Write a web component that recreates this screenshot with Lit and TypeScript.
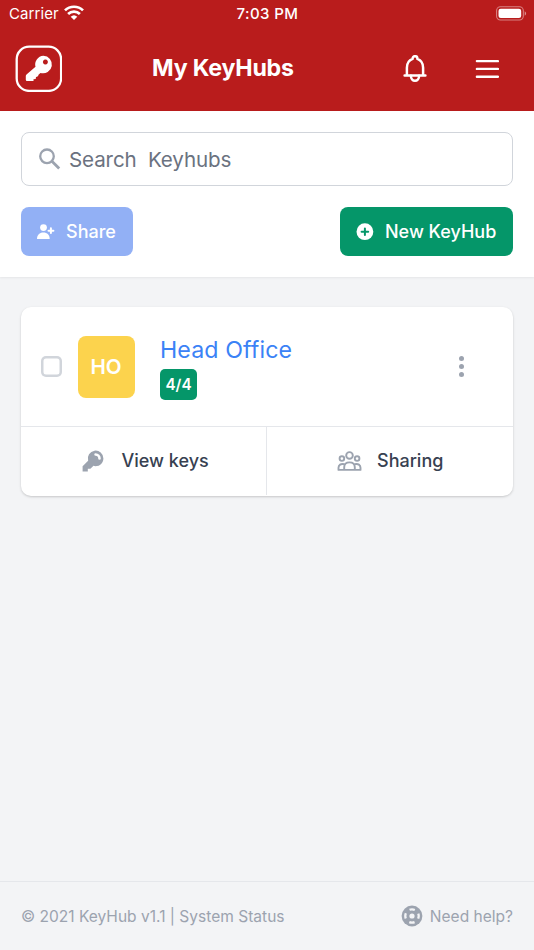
import { LitElement, html, css, svg } from "lit";
import { customElement } from "lit/decorators.js";

const wifi = svg`<svg class="wifi" viewBox="0 0 20 16"><g fill="none" stroke="#fff" stroke-width="2.7"><path d="M1 5.4a12.9 12.9 0 0 1 18 0"/><path d="M4.1 9a8.4 8.4 0 0 1 11.8 0"/></g><path fill="#fff" d="M10 15l-3.3-3.3a4.8 4.8 0 0 1 6.6 0z"/></svg>`;

const battery = svg`<svg class="battery" viewBox="0 0 32 15"><rect x=".6" y=".6" width="27.6" height="13.6" rx="4" fill="none" stroke="#fff" stroke-opacity=".45" stroke-width="1.1"/><rect x="2.6" y="2.6" width="23.4" height="9.6" rx="2.3" fill="#fff"/><path d="M29.6 5.2c2 .9 2 3.7 0 4.6z" fill="#fff" fill-opacity=".5"/></svg>`;

const logo = svg`<svg class="logo" viewBox="0 0 47 47"><rect x="1.7" y="1.7" width="44.4" height="44.2" rx="12.5" fill="none" stroke="#fff" stroke-width="2.3"/><path fill="#fff" fill-rule="evenodd" d="M28.400 10.700a8.800 8.800 0 1 1-2.900 17.200l-1.800 1.600q-.3 2.500-2.700 2.400l-.3 2-2.200.3v1.800H12q-1.200 0-1.200-1.200v-3.700q0-.9.700-1.500L20.500 21.800A8.800 8.800 0 0 1 28.400 10.700zM30.400 14.400a2.500 2.500 0 1 0 .01 0z"/></svg>`;

const bell = svg`<svg class="bell" viewBox="0 0 24 28" fill="none" stroke="#fff" stroke-width="2.5" stroke-linejoin="round" stroke-linecap="round"><path d="M1.6 20.4h20.8M3.9 20v-7.2c0-4.5 2.4-7.7 5.7-8.900v-.3a2.400 2.400 0 0 1 4.800 0v.3c3.300 1.200 5.700 4.400 5.700 8.900V20"/><path d="M7.900 20.800a4.100 5 0 0 0 8.200 0"/></svg>`;

const menu = svg`<svg class="menu" viewBox="0 0 24 20" stroke="#fff" stroke-width="2.4" stroke-linecap="round"><path d="M1.900 2.100h21M1.900 9.900h21M1.900 17.700h21"/></svg>`;

const search = svg`<svg class="search-icon" viewBox="0 0 22 22" fill="none" stroke="#9ca3af"><circle cx="8" cy="8.300" r="6.800" stroke-width="2.300"/><path d="M12.900 13.200l7.300 7.300" stroke-width="2.800"/></svg>`;

const userPlus = svg`<svg class="user-plus" viewBox="0 0 18 16"><circle cx="6.500" cy="3.600" r="3.400" fill="#fff"/><path fill="#fff" d="M0 14.900c0-4 2.500-6.500 6.400-6.500s6.300 2.500 6.300 6.500z"/><path d="M13.900 4.200v4.900M11.500 6.700h4.900" stroke="#fff" stroke-width="2" stroke-linecap="round"/></svg>`;

const plusCircle = svg`<svg class="plus" viewBox="0 0 18 18"><circle cx="8.900" cy="8.700" r="8.400" fill="#fff"/><path d="M8.900 5.400v6.600M5.600 8.700h6.600" stroke="#059669" stroke-width="2" stroke-linecap="round"/></svg>`;

const key = svg`<svg class="key" viewBox="0 0 20 20"><path fill="#9ca3af" fill-rule="evenodd" d="M18 8a6 6 0 01-7.743 5.743L10 14l-1 1-1 1H6v2H2v-4l4.257-4.257A6 6 0 1118 8zm-6-4a1 1 0 100 2 2 2 0 012 2 1 1 0 102 0 4 4 0 00-4-4z"/></svg>`;

const group = svg`<svg class="group" viewBox="0 0 25 21" fill="none" stroke="#9ca3af" stroke-width="1.900" stroke-linejoin="round"><circle cx="12.500" cy="4.400" r="3.300"/><circle cx="4.900" cy="7.600" r="2.300"/><circle cx="20.100" cy="7.600" r="2.300"/><path d="M7.200 18.700v-2.400c0-3.100 2.200-4.900 5.300-4.900s5.300 1.800 5.300 4.900v2.400M7.200 13.200c-3.400-.9-5.700.8-5.700 3.600v2.100h22v-2.100c0-2.800-2.300-4.500-5.700-3.600"/></svg>`;

const support = svg`<svg class="support" viewBox="0 0 22 22"><circle cx="11" cy="11" r="10.400" fill="#9ca3af"/><circle cx="11" cy="11" r="6.700" fill="none" stroke="#f3f4f6" stroke-width="2.300" stroke-dasharray="5.400 5.124" stroke-dashoffset="2.700"/><circle cx="11" cy="11" r="2.600" fill="#f3f4f6"/></svg>`;

@customElement("app-root")
export class AppRoot extends LitElement {
  static styles = css`
    :host { display: flex; flex-direction: column; height: 950px; background: #f3f4f6; font-family: Inter, "Liberation Sans", sans-serif; color: #374151; }
    * { box-sizing: border-box; }
    svg { display: block; flex: none; }
    button { font: inherit; border: 0; margin: 0; padding: 0; background: none; color: inherit; }
    span, h1, a { white-space: pre; }
    header { height: 111px; background: #b91c1c; color: #fff; flex: none; }
    .status { height: 27px; display: grid; grid-template-columns: 1fr auto 1fr; align-items: center; padding: 0 7px 0 9px; font-size: 15px; }
    .carrier { display: flex; align-items: center; gap: 5px; letter-spacing: .1px; }
    .time { font-weight: 500; letter-spacing: .4px; margin-left: -1px; }
    .wifi { width: 20px; height: 16px; margin-top: -1px; }
    .battery { width: 31px; height: 15px; justify-self: end; }
    .bar { display: flex; align-items: center; height: 83px; padding: 0 35px 0 15px; }
    .logo { width: 47px; height: 47px; }
    h1 { margin: -1px 0 0 90px; font-size: 23.2px; letter-spacing: -.2px; font-weight: 700; line-height: 30px; }
    .actions { display: flex; align-items: center; gap: 48px; margin-left: auto; }
    .bell { width: 24px; height: 28px; }
    .menu { width: 24px; height: 20px; }
    .tools { height: 166px; flex: none; background: #fff; padding: 21px 21px 0; box-shadow: 0 1px 2px rgba(0,0,0,.06); }
    .search { height: 54px; border: 1.3px solid #d1d5db; border-radius: 8px; display: flex; align-items: center; padding-left: 16.5px; font-size: 20.6px; letter-spacing: -.12px; color: #6b7280; }
    .search-icon { width: 22px; height: 22px; margin-right: 8.5px; }
    .buttons { display: flex; justify-content: space-between; margin-top: 21px; }
    .btn { display: flex; align-items: center; height: 49px; border-radius: 8px; color: #fff; font-size: 18px; font-weight: 500; padding-left: 16px; }
    .share { width: 112px; background: #92b0f5; }
    .new { width: 173px; background: #059669; }
    .user-plus { width: 18px; height: 16px; margin-right: 11px; overflow: visible; }
    .plus { width: 18px; height: 18px; margin-right: 11px; }
    main { flex: 1; padding: 30px 21px 0; }
    .card { height: 189px; border-radius: 10px; background: #fff; box-shadow: 0 1px 3px rgba(0,0,0,.12), 0 1px 2px rgba(0,0,0,.07); }
    .hub { height: 119px; display: flex; align-items: center; padding: 0 41px 0 20px; }
    .check { width: 21px; height: 21px; box-shadow: inset 0 0 0 2.5px #d1d5db; border-radius: 5px; }
    .avatar { width: 57px; height: 62px; margin-left: 15.5px; border-radius: 8px; background: #fcd34d; color: #fff; display: grid; place-items: center; font-size: 20.6px; font-weight: 600; }
    .info { margin-left: 25.5px; display: flex; flex-direction: column; align-items: flex-start; padding-top: 2px; }
    .name { font-size: 23.2px; letter-spacing: .1px; line-height: 31px; color: #3b82f6; text-decoration: none; }
    .badge { width: 37px; height: 31px; margin-top: 3px; border-radius: 5px; background: #059669; color: #fff; display: grid; place-items: center; font-size: 15.3px; font-weight: 600; }
    .more { margin-left: auto; display: flex; flex-direction: column; gap: 2.6px; padding-right: 8px; }
    .dot { width: 5.3px; height: 5.3px; border-radius: 50%; background: #9ca3af; }
    .links { display: grid; grid-template-columns: 246px 1fr; height: 69px; border-top: 1px solid #e5e7eb; }
    .link { display: flex; align-items: center; font-size: 18px; font-weight: 500; color: #374151; }
    .link span { margin-top: -1px; }
    .view { border-right: 1px solid #e5e7eb; padding-left: 59px; }
    .sharing { padding-left: 70px; }
    .key { width: 26px; height: 26px; margin: -1px 15.5px 0 0; }
    .group { width: 25px; height: 21px; margin-right: 15px; }
    footer { height: 69px; border-top: 1.3px solid #e5e7eb; display: flex; align-items: center; justify-content: space-between; padding: 0 21px; font-size: 15.54px; color: #9ca3af; }
    .help { display: flex; align-items: center; gap: 7px; }
    .support { width: 22px; height: 22px; }
  `;

  render() {
    return html`
      <header>
        <div class="status">
          <div class="carrier"><span>Carrier</span>${wifi}</div>
          <span class="time">7:03 PM</span>
          ${battery}
        </div>
        <div class="bar">
          ${logo}
          <h1>My KeyHubs</h1>
          <div class="actions"><button aria-label="Notifications">${bell}</button><button aria-label="Menu">${menu}</button></div>
        </div>
      </header>
      <section class="tools">
        <div class="search">${search}<span>Search  Keyhubs</span></div>
        <div class="buttons">
          <button class="btn share">${userPlus}<span>Share</span></button>
          <button class="btn new">${plusCircle}<span>New KeyHub</span></button>
        </div>
      </section>
      <main>
        <div class="card">
          <div class="hub">
            <div class="check"></div>
            <div class="avatar"><span>HO</span></div>
            <div class="info"><a class="name">Head Office</a><div class="badge"><span>4/4</span></div></div>
            <div class="more"><div class="dot"></div><div class="dot"></div><div class="dot"></div></div>
          </div>
          <div class="links">
            <div class="link view">${key}<span>View keys</span></div>
            <div class="link sharing">${group}<span>Sharing</span></div>
          </div>
        </div>
      </main>
      <footer>
        <span>© 2021 KeyHub v1.1 | System Status</span>
        <div class="help">${support}<span>Need help?</span></div>
      </footer>
    `;
  }
}
